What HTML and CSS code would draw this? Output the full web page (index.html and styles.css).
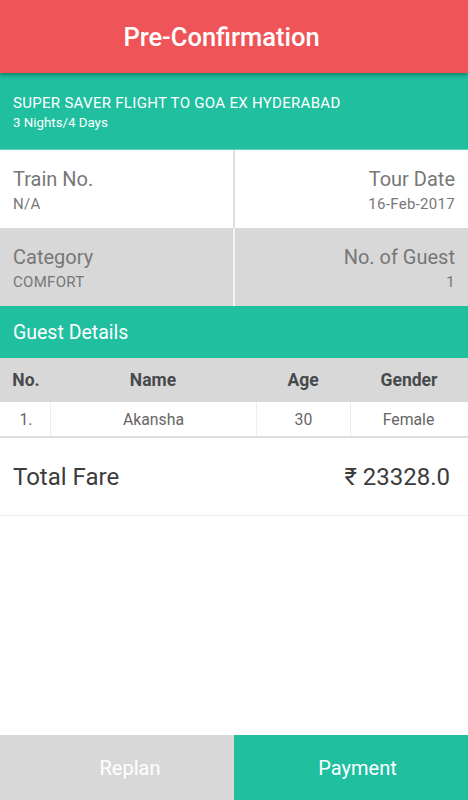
FILE: index.html
```html
<!DOCTYPE html>
<html lang="en">
    <head>
        <meta charset="UTF-8" />
        <meta name="viewport" content="width=device-width, initial-scale=1.0" />
        <title>Pre-Confirmation</title>
        <link rel="stylesheet" href="styles.css">
    </head>
    <body>
        <div class="app">
            <header class="topbar">Pre-Confirmation</header>

            <div class="package">
                <div class="package-name">SUPER SAVER FLIGHT TO GOA EX HYDERABAD</div>
                <div class="package-days">3 Nights/4 Days</div>
            </div>

            <div class="info-grid">
                <div class="info light">
                    <div class="label">Train No.</div>
                    <div class="value">N/A</div>
                </div>
                <div class="info light right">
                    <div class="label">Tour Date</div>
                    <div class="value">16-Feb-2017</div>
                </div>
                <div class="info dark">
                    <div class="label">Category</div>
                    <div class="value">COMFORT</div>
                </div>
                <div class="info dark right">
                    <div class="label">No. of Guest</div>
                    <div class="value">1</div>
                </div>
            </div>

            <div class="section-title">Guest Details</div>

            <div class="guest-table">
                <div class="row head">
                    <div class="cell no">No.</div>
                    <div class="cell name">Name</div>
                    <div class="cell age">Age</div>
                    <div class="cell gender">Gender</div>
                </div>
                <div class="row data">
                    <div class="cell no">1.</div>
                    <div class="cell name">Akansha</div>
                    <div class="cell age">30</div>
                    <div class="cell gender">Female</div>
                </div>
            </div>

            <div class="total">
                <span>Total Fare</span>
                <span>&#8377; 23328.0</span>
            </div>

            <div class="spacer"></div>

            <div class="actions">
                <button class="btn replan">Replan</button>
                <button class="btn pay">Payment</button>
            </div>
        </div>
    </body>
</html>
```

FILE: styles.css
```css
body {
  margin: 0;
  font-family: Roboto, "Noto Sans", sans-serif;
  background: #fff;
}

.app {
  display: flex;
  flex-direction: column;
  height: 800px;
  width: 468px;
}

.topbar {
  height: 73px;
  background-color: #ef5558;
  color: #fff;
  font-size: 25.5px;
  font-weight: 500;
  display: flex;
  align-items: center;
  justify-content: center;
  padding-right: 25px;
  box-shadow: 0 2px 4px rgba(0, 0, 0, 0.35);
  position: relative;
  z-index: 1;
}

.package {
  height: 77px;
  background-color: #1fbf9f;
  color: #fff;
  padding: 21px 13px 0;
  box-sizing: border-box;
  border-bottom: 1px solid #5fd3bb;
}

.package-name {
  font-size: 15px;
  letter-spacing: 0.3px;
  line-height: 19px;
}

.package-days {
  font-size: 13.3px;
  line-height: 19px;
}

.info-grid {
  display: grid;
  grid-template-columns: 233px 235px;
}

.info {
  height: 78px;
  box-sizing: border-box;
  padding: 16px 13px 0;
}

.info.light {
  background: #fff;
}

.info.dark {
  background: #d8d8d8;
}

.info.right {
  text-align: right;
  border-left: 2px solid #dedede;
}

.info.dark.right {
  border-left-color: #f4f4f4;
}

.label {
  font-size: 20px;
  color: #777;
  line-height: 27px;
}

.value {
  font-size: 15px;
  letter-spacing: 0.3px;
  color: #777;
  line-height: 22px;
}

.section-title {
  height: 52px;
  background-color: #1fbf9f;
  color: #fff;
  font-size: 19.5px;
  padding-left: 13px;
  display: flex;
  align-items: center;
}

.guest-table {
  border-bottom: 2px solid #dedede;
}

.row {
  display: flex;
}

.row.head {
  height: 44px;
  background: #d8d8d8;
  font-weight: bold;
  font-size: 17.5px;
  color: #474a4d;
}

.row.data {
  height: 34px;
  margin: 0 2px;
  font-size: 15.8px;
  color: #666;
}

.cell {
  display: flex;
  align-items: center;
  justify-content: center;
  box-sizing: border-box;
}

.row.data .cell + .cell {
  border-left: 1px solid #eeeeee;
}

.row.head .no { width: 50px; padding-left: 2px; }
.row.head .name { width: 206px; }
.row.head .age { width: 94px; }
.row.head .gender { width: 118px; }

.row.data .no { width: 48px; }
.row.data .name { width: 206px; }
.row.data .age { width: 94px; }
.row.data .gender { width: 116px; }

.total {
  height: 77px;
  display: flex;
  align-items: center;
  justify-content: space-between;
  padding: 0 18px 0 13px;
  font-size: 24px;
  color: #3c3c3c;
  border-bottom: 1px solid #ececec;
}

.spacer {
  flex: 1;
}

.actions {
  display: flex;
  height: 65px;
}

.btn {
  border: none;
  margin: 0;
  font-family: Roboto, "Noto Sans", sans-serif;
  font-size: 20px;
  color: #fff;
  cursor: pointer;
}

.btn.replan {
  width: 234px;
  padding-left: 32px;
  background: #d8d8d8;
}

.btn.pay {
  width: 234px;
  padding-left: 19px;
  background: #1fbf9f;
}
```
